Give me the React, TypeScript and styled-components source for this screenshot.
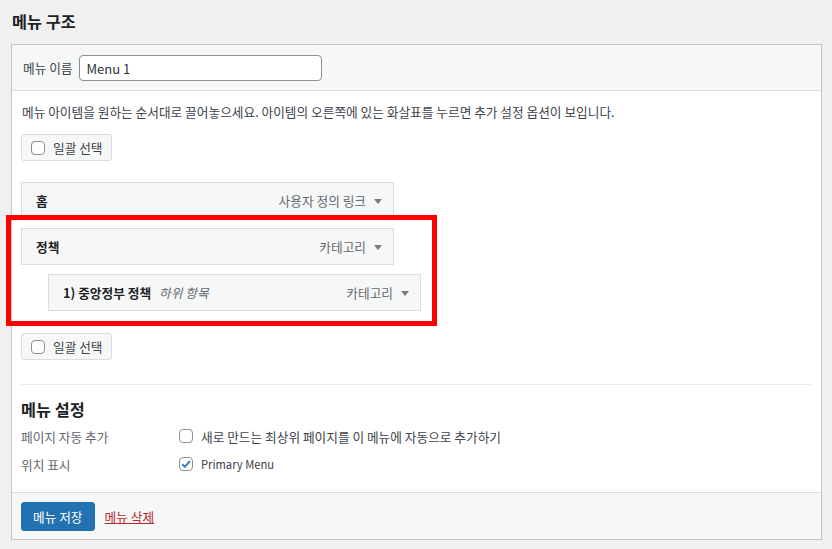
import React from 'react';
import styled, { createGlobalStyle } from 'styled-components';

const GlobalStyle = createGlobalStyle`
  html, body {
    margin: 0;
    padding: 0;
    background: #f0f0f1;
  }
  body {
    font-family: "Noto Sans CJK KR", "Noto Sans", sans-serif;
    font-size: 12.7px;
    color: #3c434a;
  }
  #root {
    min-height: 549px;
  }
`;

const Page = styled.div`
  position: relative;
  padding: 0 10px 8px 11px;
  width: 832px;
  box-sizing: border-box;
`;

const PageTitle = styled.h2`
  margin: 0;
  padding: 8px 1px 0;
  height: 44px;
  box-sizing: border-box;
  font-size: 16.3px;
  line-height: 26px;
  font-weight: 700;
  color: #1d2327;
`;

const Panel = styled.div`
  width: 811px;
  box-sizing: border-box;
  border: 1px solid #c3c4c7;
  background: #fff;
`;

const Header = styled.div`
  display: flex;
  align-items: center;
  gap: 6px;
  padding: 10px 10px 9px;
  background: #f6f7f7;
  border-bottom: 1px solid #dcdcde;
`;

const Label = styled.label`
  line-height: 18px;
  color: #3c434a;
  padding-left: 1px;
`;

const NameInput = styled.input`
  width: 243px;
  height: 26px;
  box-sizing: border-box;
  border: 1px solid #8c8f94;
  border-radius: 4px;
  padding: 0 7px;
  font-family: inherit;
  font-size: 13px;
  color: #2c3338;
  background: #fff;
  outline: none;
`;

const Body = styled.div`
  display: flex;
  flex-direction: column;
  align-items: flex-start;
  padding: 12px 10px 14px 9px;
`;

const Description = styled.p`
  margin: 0;
  padding-left: 1px;
  line-height: 18px;
  color: #3c434a;
`;

const BulkButton = styled.button<{ $top: number }>`
  display: flex;
  align-items: center;
  gap: 8px;
  margin-top: ${p => p.$top}px;
  height: 27px;
  padding: 0 8px 0 9px;
  border: 1px solid #dcdcde;
  border-radius: 3px;
  background: #f6f7f7;
  font-family: inherit;
  font-size: 12.7px;
  color: #3c434a;
  cursor: pointer;
`;

const Box = styled.span`
  display: inline-flex;
  align-items: center;
  justify-content: center;
  width: 14px;
  height: 14px;
  box-sizing: border-box;
  border: 1px solid #8c8f94;
  border-radius: 4px;
  background: #fff;
  flex: none;
`;

const ItemList = styled.div`
  display: flex;
  flex-direction: column;
  gap: 9px;
  margin-top: 21px;
`;

const Item = styled.div<{ $depth: number }>`
  display: flex;
  align-items: center;
  justify-content: space-between;
  width: 373px;
  height: 37px;
  box-sizing: border-box;
  margin-left: ${p => p.$depth * 27}px;
  padding: 0 11px 0 14px;
  border: 1px solid #dcdcde;
  background: #f6f7f7;
`;

const ItemTitle = styled.span`
  font-weight: 700;
  color: #1d2327;
  line-height: 18px;
`;

const SubNote = styled.span`
  margin-left: 8px;
  font-weight: 400;
  font-style: italic;
  color: #646970;
`;

const ItemControls = styled.span`
  display: flex;
  align-items: center;
  gap: 8px;
  color: #646970;
`;

const Arrow = styled.span`
  width: 0;
  height: 0;
  border-left: 4px solid transparent;
  border-right: 4px solid transparent;
  border-top: 5px solid #787c82;
  margin-top: 2px;
`;

const Separator = styled.div`
  align-self: stretch;
  margin: 24px 0 0;
  height: 1px;
  background: #ececec;
`;

const SettingsTitle = styled.h3`
  margin: 13px 0 0;
  font-size: 16.3px;
  line-height: 22px;
  font-weight: 700;
  color: #1d2327;
`;

const SettingsRow = styled.div<{ $first?: boolean }>`
  display: flex;
  align-items: center;
  height: 28px;
  margin-top: ${p => (p.$first ? 2 : 0)}px;
`;

const RowLabel = styled.span`
  width: 158px;
  color: #646970;
`;

const RowField = styled.label`
  display: flex;
  align-items: center;
  gap: 8px;
  color: #3c434a;
`;

const LatinText = styled.span`
  font-size: 11.2px;
`;

const Footer = styled.div`
  display: flex;
  align-items: center;
  gap: 10px;
  padding: 9px 9px 8px;
  background: #f6f7f7;
  border-top: 1px solid #dcdcde;
`;

const SaveButton = styled.button`
  height: 29px;
  padding: 0 11px;
  border: 1px solid #2271b1;
  border-radius: 3px;
  background: #2271b1;
  color: #fff;
  font-family: inherit;
  font-size: 12.7px;
  cursor: pointer;
`;

const DeleteLink = styled.a`
  color: #b32d2e;
  text-decoration: underline;
  cursor: pointer;
`;

const Highlight = styled.div`
  position: absolute;
  left: 6px;
  top: 215px;
  width: 431px;
  height: 111px;
  box-sizing: border-box;
  border: 5px solid #ff0000;
  pointer-events: none;
`;

const CheckMark = () => (
  <svg width="12" height="12" viewBox="0 0 12 12">
    <path d="M2.2 6.2 L4.9 8.8 L9.9 3" fill="none" stroke="#3582c4" strokeWidth="2" />
  </svg>
);

type MenuItem = { title: string; type: string; depth: number; sub?: string };

const items: MenuItem[] = [
  { title: '홈', type: '사용자 정의 링크', depth: 0 },
  { title: '정책', type: '카테고리', depth: 0 },
  { title: '1) 중앙정부 정책', type: '카테고리', depth: 1, sub: '하위 항목' },
];

const App = () => {
  return (
    <>
      <GlobalStyle />
      <Page>
        <PageTitle>메뉴 구조</PageTitle>
        <Panel>
          <Header>
            <Label>메뉴 이름</Label>
            <NameInput defaultValue="Menu 1" />
          </Header>
          <Body>
            <Description>
              메뉴 아이템을 원하는 순서대로 끌어놓으세요. 아이템의 오른쪽에 있는 화살표를 누르면 추가 설정 옵션이 보입니다.
            </Description>
            <BulkButton $top={13}>
              <Box />
              일괄 선택
            </BulkButton>
            <ItemList>
              {items.map(item => (
                <Item key={item.title} $depth={item.depth}>
                  <ItemTitle>
                    {item.title}
                    {item.sub && <SubNote>{item.sub}</SubNote>}
                  </ItemTitle>
                  <ItemControls>
                    {item.type}
                    <Arrow />
                  </ItemControls>
                </Item>
              ))}
            </ItemList>
            <BulkButton $top={22}>
              <Box />
              일괄 선택
            </BulkButton>
            <Separator />
            <SettingsTitle>메뉴 설정</SettingsTitle>
            <SettingsRow $first>
              <RowLabel>페이지 자동 추가</RowLabel>
              <RowField>
                <Box />
                새로 만드는 최상위 페이지를 이 메뉴에 자동으로 추가하기
              </RowField>
            </SettingsRow>
            <SettingsRow>
              <RowLabel>위치 표시</RowLabel>
              <RowField>
                <Box>
                  <CheckMark />
                </Box>
                <LatinText>Primary Menu</LatinText>
              </RowField>
            </SettingsRow>
          </Body>
          <Footer>
            <SaveButton>메뉴 저장</SaveButton>
            <DeleteLink>메뉴 삭제</DeleteLink>
          </Footer>
        </Panel>
        <Highlight />
      </Page>
    </>
  );
};

export default App;
